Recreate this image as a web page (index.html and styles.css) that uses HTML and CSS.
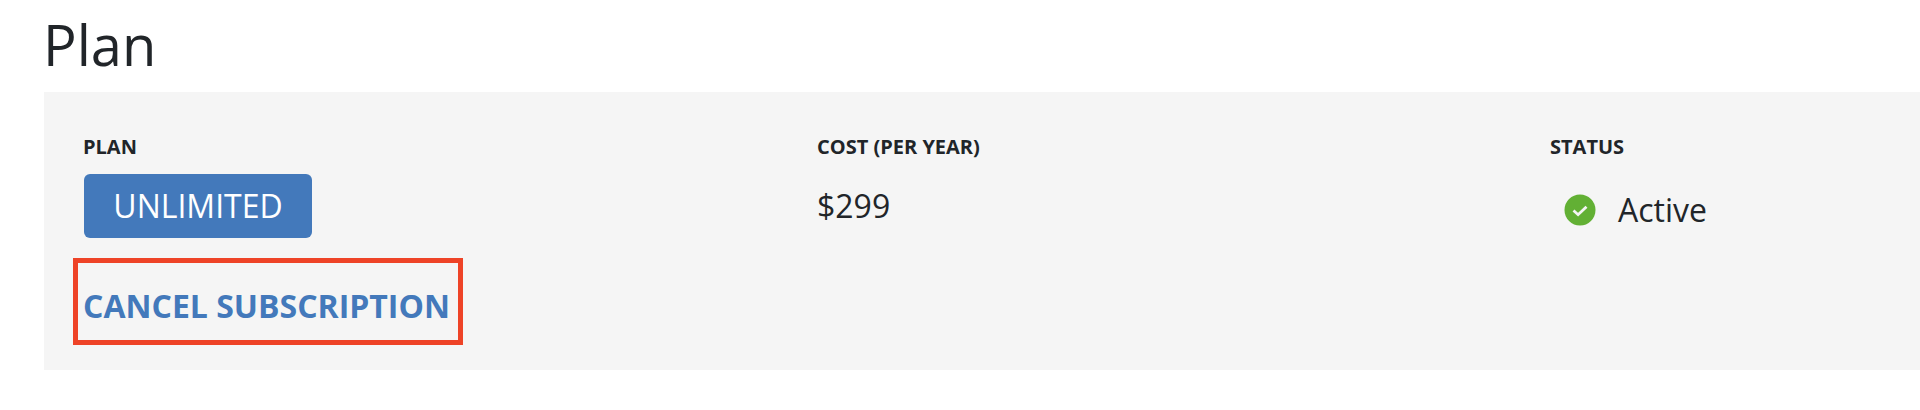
FILE: index.html
```html
<!DOCTYPE html>
<html lang="en">
<head>
  <meta charset="UTF-8">
  <title>Plan</title>
  <link rel="stylesheet" href="styles.css">
</head>
<body>
  <h1 class="page-title">Plan</h1>
  <section class="plan-panel">
    <div class="plan-col">
      <div class="plan-label">PLAN</div>
      <div class="plan-badge">UNLIMITED</div>
      <div class="cancel-box"><a href="#" class="cancel-link">CANCEL SUBSCRIPTION</a></div>
    </div>
    <div class="plan-col">
      <div class="plan-label">COST (PER YEAR)</div>
      <div class="plan-cost">$299</div>
    </div>
    <div class="plan-col">
      <div class="plan-label">STATUS</div>
      <div class="plan-status">
        <svg class="status-icon" viewBox="0 0 32 32" width="32" height="32">
          <circle cx="16" cy="16" r="15.5" fill="#62b034"/>
          <path d="M9.5 16.5l4.6 4.2 8.4-8" fill="none" stroke="#f4f4f4" stroke-width="2.8"/>
        </svg>
        <span>Active</span>
      </div>
    </div>
  </section>
</body>
</html>
```

FILE: styles.css
```css
* {
  margin: 0;
  padding: 0;
  box-sizing: border-box;
  font-family: "Open Sans", "Noto Sans", sans-serif;
}

body {
  background: #fff;
  color: #212529;
  height: 410px;
  overflow: hidden;
}

.page-title {
  font-size: 56px;
  font-weight: 400;
  line-height: 76px;
  padding: 6px 0 10px 43px;
}

.plan-panel {
  margin-left: 44px;
  height: 278px;
  background: #f5f5f5;
  padding: 43px 0 0 39px;
  display: grid;
  grid-template-columns: 734px 733px 1fr;
}

.plan-label {
  font-size: 20px;
  font-weight: 700;
  line-height: 24px;
}

.plan-badge {
  margin: 15px 0 0 1px;
  width: 228px;
  height: 64px;
  background: #4379bb;
  border-radius: 6px;
  color: #fff;
  font-size: 32px;
  line-height: 64px;
  text-align: center;
}

.cancel-box {
  margin: 20px 0 0 -10px;
  width: 390px;
  height: 87px;
  border: 5px solid #ee4327;
  padding-left: 5px;
  line-height: 86px;
}

.cancel-link {
  color: #4379bb;
  font-size: 32px;
  font-weight: 700;
  text-decoration: none;
  white-space: nowrap;
}

.plan-cost {
  margin-top: 26px;
  font-size: 32px;
  line-height: 42px;
}

.plan-status {
  margin: 28px 0 0 14px;
  display: flex;
  align-items: center;
  gap: 22px;
  font-size: 32px;
  line-height: 46px;
}
```
